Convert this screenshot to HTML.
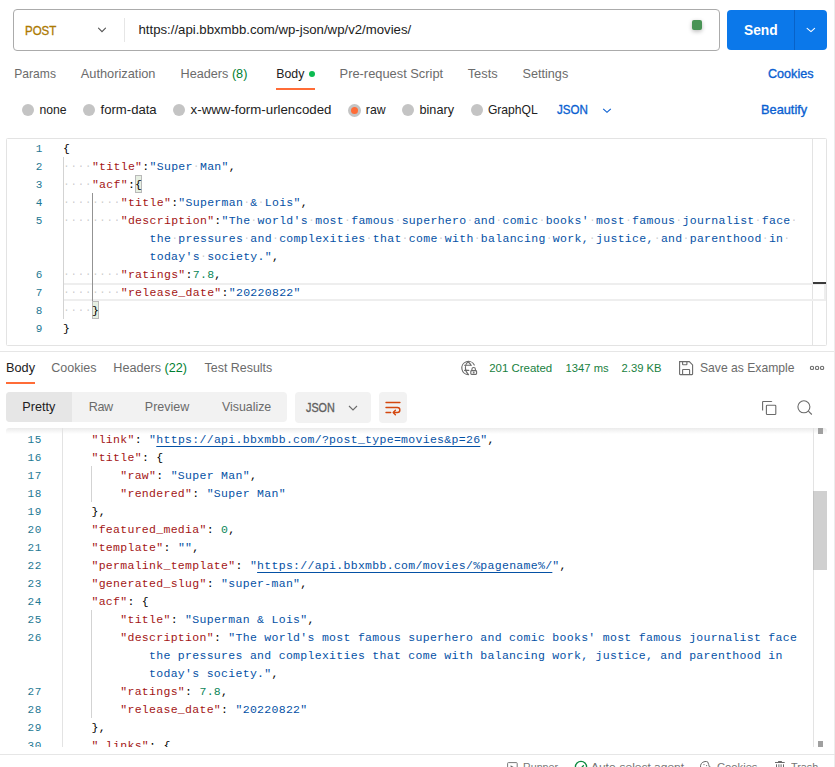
<!DOCTYPE html><html><head><meta charset="utf-8"><style>
*{margin:0;padding:0;box-sizing:border-box}
html,body{width:835px;height:767px;overflow:hidden;background:#fff}
body{position:relative;font-family:"Liberation Sans",sans-serif}
.t{position:absolute;white-space:pre;line-height:20px}
.abs{position:absolute}
.code{position:absolute;font-family:"Liberation Mono",monospace;font-size:11.5px;letter-spacing:0.3px;line-height:18px;white-space:pre;height:18px}
.ln{font-size:11px;letter-spacing:0.6px}
.lk{text-decoration:underline;text-underline-offset:3px;text-decoration-thickness:1px;text-decoration-skip-ink:none}
</style></head><body>
<div class="abs" style="left:834px;top:0;width:1px;height:767px;background:#ececec"></div><div class="abs" style="left:13px;top:9px;width:707px;height:42px;border:1px solid #ababab;border-radius:4px"></div><div class="t" style="left:25px;top:20.63px;font-size:12.6px;color:#ad7a03;font-weight:400;-webkit-text-stroke:0.35px #ad7a03;transform:scaleX(0.9127);transform-origin:0 0;">POST</div>
<svg class="abs" style="left:97px;top:26px" width="10" height="8" viewBox="0 0 10 8"><path d="M1.5 2.2 L5 5.7 L8.5 2.2" fill="none" stroke="#555555" stroke-width="1.1" stroke-linecap="round"/></svg><div class="abs" style="left:124px;top:18px;width:1px;height:24px;background:#e6e6e6"></div><div class="t" style="left:138.5px;top:19.83px;font-size:13.2px;color:#212121;font-weight:400;">https://api.bbxmbb.com/wp-json/wp/v2/movies/</div>
<div class="abs" style="left:692px;top:20px;width:10px;height:10px;background:#489455;border-radius:2px;box-shadow:0 1.5px 4px rgba(0,0,0,0.28)"></div><div class="abs" style="left:727px;top:10px;width:100px;height:40px;background:#0b78ea;border-radius:4px"></div><div class="abs" style="left:794px;top:10px;width:1px;height:40px;background:#0862c8"></div><div class="t" style="left:743.5px;top:19.61px;font-size:14.4px;color:#ffffff;font-weight:700;transform:scaleX(0.9583);transform-origin:0 0;">Send</div>
<svg class="abs" style="left:805px;top:25px" width="12" height="10" viewBox="0 0 12 10"><path d="M2.1 3.4 L6 6.6 L9.6 3.4" fill="none" stroke="#ffffff" stroke-width="1.1" stroke-linecap="round" stroke-linejoin="round"/></svg><div class="t" style="left:14.3px;top:63.81px;font-size:12.1px;color:#6b6b6b;font-weight:400;">Params</div>
<div class="t" style="left:80.8px;top:63.56px;font-size:12.8px;color:#6b6b6b;font-weight:400;">Authorization</div>
<div class="t" style="left:180.6px;top:63.62px;font-size:12.65px;color:#6b6b6b;font-weight:400;">Headers <span style="color:#007f31">(8)</span></div>
<div class="t" style="left:276.3px;top:63.74px;font-size:12.3px;color:#212121;font-weight:400;">Body</div>
<div class="t" style="left:339.6px;top:63.55px;font-size:12.85px;color:#6b6b6b;font-weight:400;">Pre-request Script</div>
<div class="t" style="left:467.7px;top:63.55px;font-size:12.85px;color:#6b6b6b;font-weight:400;">Tests</div>
<div class="t" style="left:522.5px;top:63.61px;font-size:12.67px;color:#6b6b6b;font-weight:400;">Settings</div>
<div class="abs" style="left:309px;top:71px;width:6px;height:6px;border-radius:50%;background:#0cbb52"></div><div class="abs" style="left:276px;top:88px;width:39px;height:2px;background:#ff6c37"></div><div class="t" style="left:768.4px;top:63.67px;font-size:12.5px;color:#0a5fd1;font-weight:400;-webkit-text-stroke:0.35px #0a5fd1;transform:scaleX(1.0080);transform-origin:0 0;">Cookies</div>
<div class="abs" style="left:22.2px;top:104.2px;width:12px;height:12px;border-radius:50%;background:#c4c4c4"></div><div class="t" style="left:39.5px;top:99.87px;font-size:12.2px;color:#212121;font-weight:400;">none</div>
<div class="abs" style="left:83px;top:104.2px;width:12px;height:12px;border-radius:50%;background:#c4c4c4"></div><div class="t" style="left:100.6px;top:99.56px;font-size:13.1px;color:#212121;font-weight:400;">form-data</div>
<div class="abs" style="left:173px;top:104.2px;width:12px;height:12px;border-radius:50%;background:#c4c4c4"></div><div class="t" style="left:190.6px;top:99.50px;font-size:13.28px;color:#212121;font-weight:400;">x-www-form-urlencoded</div>
<div class="abs" style="left:348.0px;top:104px;width:13px;height:13px;border-radius:50%;background:#c4c4c4"></div><div class="abs" style="left:351.0px;top:107px;width:7px;height:7px;border-radius:50%;background:#ff6c37"></div><div class="t" style="left:365.8px;top:99.85px;font-size:12.26px;color:#212121;font-weight:400;">raw</div>
<div class="abs" style="left:402.4px;top:104.2px;width:12px;height:12px;border-radius:50%;background:#c4c4c4"></div><div class="t" style="left:419.5px;top:99.71px;font-size:12.66px;color:#212121;font-weight:400;">binary</div>
<div class="abs" style="left:471px;top:104.2px;width:12px;height:12px;border-radius:50%;background:#c4c4c4"></div><div class="t" style="left:487.9px;top:99.90px;font-size:12.13px;color:#212121;font-weight:400;">GraphQL</div>
<div class="t" style="left:557px;top:99.60px;font-size:12.7px;color:#0a5fd1;font-weight:400;-webkit-text-stroke:0.35px #0a5fd1;transform:scaleX(0.9134);transform-origin:0 0;">JSON</div>
<svg class="abs" style="left:601px;top:105.5px" width="12" height="10" viewBox="0 0 12 10"><path d="M2.2 2.8 L6 6.3 L9.8 2.8" fill="none" stroke="#0a5fd1" stroke-width="1.15"/></svg><div class="t" style="left:761.4px;top:99.77px;font-size:12.2px;color:#0a5fd1;font-weight:400;-webkit-text-stroke:0.35px #0a5fd1;transform:scaleX(1.0492);transform-origin:0 0;">Beautify</div>
<div class="abs" style="left:6px;top:138px;width:821px;height:208px;border:1px solid #e3e3e3;border-radius:1.5px"></div><div class="abs" style="left:812px;top:139px;width:1px;height:206px;background:#e3e3e3"></div><div class="abs" style="left:63px;top:283px;width:763px;height:18px;border-top:2px solid #eeeeee;border-bottom:2px solid #eeeeee"></div><div class="abs" style="left:824px;top:283px;width:2px;height:18px;background:#eeeeee"></div><div class="abs" style="left:813px;top:282px;width:13px;height:2px;background:#3b3b3b"></div><div class="abs" style="left:63px;top:157px;width:1px;height:162px;background:#d3d3d3"></div><div class="abs" style="left:92px;top:193px;width:1px;height:108px;background:#939393"></div><div class="abs" style="left:135px;top:175px;width:7px;height:18px;background:#e6efe2;border:1px solid #b9b9b9"></div><div class="abs" style="left:92px;top:301px;width:7px;height:18px;background:#e6efe2;border:1px solid #b9b9b9"></div><div class="code ln" style="left:19px;top:139.8px;width:24px;text-align:right;color:#237893">1</div><div class="code" style="left:63.1px;top:139.8px"><span style="color:#000000">{</span></div><div class="code ln" style="left:19px;top:157.8px;width:24px;text-align:right;color:#237893">2</div><div class="code" style="left:63.1px;top:157.8px"><span style="color:rgba(51,51,51,0.25)"><span style="color:rgba(51,51,51,0.25);position:relative;top:-1px">·</span><span style="color:rgba(51,51,51,0.25);position:relative;top:-1px">·</span><span style="color:rgba(51,51,51,0.25);position:relative;top:-1px">·</span><span style="color:rgba(51,51,51,0.25);position:relative;top:-1px">·</span></span><span style="color:#a31515">&quot;title&quot;</span><span style="color:#000000">:</span><span style="color:#0451a5">&quot;Super<span style="color:rgba(51,51,51,0.25);position:relative;top:-1px">·</span>Man&quot;</span><span style="color:#000000">,</span></div><div class="code ln" style="left:19px;top:175.8px;width:24px;text-align:right;color:#237893">3</div><div class="code" style="left:63.1px;top:175.8px"><span style="color:rgba(51,51,51,0.25)"><span style="color:rgba(51,51,51,0.25);position:relative;top:-1px">·</span><span style="color:rgba(51,51,51,0.25);position:relative;top:-1px">·</span><span style="color:rgba(51,51,51,0.25);position:relative;top:-1px">·</span><span style="color:rgba(51,51,51,0.25);position:relative;top:-1px">·</span></span><span style="color:#a31515">&quot;acf&quot;</span><span style="color:#000000">:{</span></div><div class="code ln" style="left:19px;top:193.8px;width:24px;text-align:right;color:#237893">4</div><div class="code" style="left:63.1px;top:193.8px"><span style="color:rgba(51,51,51,0.25)"><span style="color:rgba(51,51,51,0.25);position:relative;top:-1px">·</span><span style="color:rgba(51,51,51,0.25);position:relative;top:-1px">·</span><span style="color:rgba(51,51,51,0.25);position:relative;top:-1px">·</span><span style="color:rgba(51,51,51,0.25);position:relative;top:-1px">·</span><span style="color:rgba(51,51,51,0.25);position:relative;top:-1px">·</span><span style="color:rgba(51,51,51,0.25);position:relative;top:-1px">·</span><span style="color:rgba(51,51,51,0.25);position:relative;top:-1px">·</span><span style="color:rgba(51,51,51,0.25);position:relative;top:-1px">·</span></span><span style="color:#a31515">&quot;title&quot;</span><span style="color:#000000">:</span><span style="color:#0451a5">&quot;Superman<span style="color:rgba(51,51,51,0.25);position:relative;top:-1px">·</span>&amp;<span style="color:rgba(51,51,51,0.25);position:relative;top:-1px">·</span>Lois&quot;</span><span style="color:#000000">,</span></div><div class="code ln" style="left:19px;top:211.8px;width:24px;text-align:right;color:#237893">5</div><div class="code" style="left:63.1px;top:211.8px"><span style="color:rgba(51,51,51,0.25)"><span style="color:rgba(51,51,51,0.25);position:relative;top:-1px">·</span><span style="color:rgba(51,51,51,0.25);position:relative;top:-1px">·</span><span style="color:rgba(51,51,51,0.25);position:relative;top:-1px">·</span><span style="color:rgba(51,51,51,0.25);position:relative;top:-1px">·</span><span style="color:rgba(51,51,51,0.25);position:relative;top:-1px">·</span><span style="color:rgba(51,51,51,0.25);position:relative;top:-1px">·</span><span style="color:rgba(51,51,51,0.25);position:relative;top:-1px">·</span><span style="color:rgba(51,51,51,0.25);position:relative;top:-1px">·</span></span><span style="color:#a31515">&quot;description&quot;</span><span style="color:#000000">:</span><span style="color:#0451a5">&quot;The<span style="color:rgba(51,51,51,0.25);position:relative;top:-1px">·</span>world&#x27;s<span style="color:rgba(51,51,51,0.25);position:relative;top:-1px">·</span>most<span style="color:rgba(51,51,51,0.25);position:relative;top:-1px">·</span>famous<span style="color:rgba(51,51,51,0.25);position:relative;top:-1px">·</span>superhero<span style="color:rgba(51,51,51,0.25);position:relative;top:-1px">·</span>and<span style="color:rgba(51,51,51,0.25);position:relative;top:-1px">·</span>comic<span style="color:rgba(51,51,51,0.25);position:relative;top:-1px">·</span>books&#x27;<span style="color:rgba(51,51,51,0.25);position:relative;top:-1px">·</span>most<span style="color:rgba(51,51,51,0.25);position:relative;top:-1px">·</span>famous<span style="color:rgba(51,51,51,0.25);position:relative;top:-1px">·</span>journalist<span style="color:rgba(51,51,51,0.25);position:relative;top:-1px">·</span>face<span style="color:rgba(51,51,51,0.25);position:relative;top:-1px">·</span></span></div><div class="code" style="left:63.1px;top:229.8px"><span style="color:#000000">            </span><span style="color:#0451a5">the<span style="color:rgba(51,51,51,0.25);position:relative;top:-1px">·</span>pressures<span style="color:rgba(51,51,51,0.25);position:relative;top:-1px">·</span>and<span style="color:rgba(51,51,51,0.25);position:relative;top:-1px">·</span>complexities<span style="color:rgba(51,51,51,0.25);position:relative;top:-1px">·</span>that<span style="color:rgba(51,51,51,0.25);position:relative;top:-1px">·</span>come<span style="color:rgba(51,51,51,0.25);position:relative;top:-1px">·</span>with<span style="color:rgba(51,51,51,0.25);position:relative;top:-1px">·</span>balancing<span style="color:rgba(51,51,51,0.25);position:relative;top:-1px">·</span>work,<span style="color:rgba(51,51,51,0.25);position:relative;top:-1px">·</span>justice,<span style="color:rgba(51,51,51,0.25);position:relative;top:-1px">·</span>and<span style="color:rgba(51,51,51,0.25);position:relative;top:-1px">·</span>parenthood<span style="color:rgba(51,51,51,0.25);position:relative;top:-1px">·</span>in<span style="color:rgba(51,51,51,0.25);position:relative;top:-1px">·</span></span></div><div class="code" style="left:63.1px;top:247.8px"><span style="color:#000000">            </span><span style="color:#0451a5">today&#x27;s<span style="color:rgba(51,51,51,0.25);position:relative;top:-1px">·</span>society.&quot;</span><span style="color:#000000">,</span></div><div class="code ln" style="left:19px;top:265.8px;width:24px;text-align:right;color:#237893">6</div><div class="code" style="left:63.1px;top:265.8px"><span style="color:rgba(51,51,51,0.25)"><span style="color:rgba(51,51,51,0.25);position:relative;top:-1px">·</span><span style="color:rgba(51,51,51,0.25);position:relative;top:-1px">·</span><span style="color:rgba(51,51,51,0.25);position:relative;top:-1px">·</span><span style="color:rgba(51,51,51,0.25);position:relative;top:-1px">·</span><span style="color:rgba(51,51,51,0.25);position:relative;top:-1px">·</span><span style="color:rgba(51,51,51,0.25);position:relative;top:-1px">·</span><span style="color:rgba(51,51,51,0.25);position:relative;top:-1px">·</span><span style="color:rgba(51,51,51,0.25);position:relative;top:-1px">·</span></span><span style="color:#a31515">&quot;ratings&quot;</span><span style="color:#000000">:</span><span style="color:#098658">7.8</span><span style="color:#000000">,</span></div><div class="code ln" style="left:19px;top:283.8px;width:24px;text-align:right;color:#237893">7</div><div class="code" style="left:63.1px;top:283.8px"><span style="color:rgba(51,51,51,0.25)"><span style="color:rgba(51,51,51,0.25);position:relative;top:-1px">·</span><span style="color:rgba(51,51,51,0.25);position:relative;top:-1px">·</span><span style="color:rgba(51,51,51,0.25);position:relative;top:-1px">·</span><span style="color:rgba(51,51,51,0.25);position:relative;top:-1px">·</span><span style="color:rgba(51,51,51,0.25);position:relative;top:-1px">·</span><span style="color:rgba(51,51,51,0.25);position:relative;top:-1px">·</span><span style="color:rgba(51,51,51,0.25);position:relative;top:-1px">·</span><span style="color:rgba(51,51,51,0.25);position:relative;top:-1px">·</span></span><span style="color:#a31515">&quot;release_date&quot;</span><span style="color:#000000">:</span><span style="color:#0451a5">&quot;20220822&quot;</span></div><div class="code ln" style="left:19px;top:301.8px;width:24px;text-align:right;color:#237893">8</div><div class="code" style="left:63.1px;top:301.8px"><span style="color:rgba(51,51,51,0.25)"><span style="color:rgba(51,51,51,0.25);position:relative;top:-1px">·</span><span style="color:rgba(51,51,51,0.25);position:relative;top:-1px">·</span><span style="color:rgba(51,51,51,0.25);position:relative;top:-1px">·</span><span style="color:rgba(51,51,51,0.25);position:relative;top:-1px">·</span></span><span style="color:#000000">}</span></div><div class="code ln" style="left:19px;top:319.8px;width:24px;text-align:right;color:#237893">9</div><div class="code" style="left:63.1px;top:319.8px"><span style="color:#000000">}</span></div><div class="abs" style="left:0;top:351px;width:834px;height:1px;background:#e6e6e6"></div><div class="t" style="left:6px;top:357.99px;font-size:12.72px;color:#212121;font-weight:400;">Body</div>
<div class="t" style="left:51.3px;top:358.06px;font-size:12.53px;color:#6b6b6b;font-weight:400;">Cookies</div>
<div class="t" style="left:113.3px;top:358.02px;font-size:12.65px;color:#6b6b6b;font-weight:400;">Headers <span style="color:#007f31">(22)</span></div>
<div class="t" style="left:204.6px;top:358.09px;font-size:12.43px;color:#6b6b6b;font-weight:400;">Test Results</div>
<div class="abs" style="left:6px;top:382px;width:29px;height:2px;background:#ff6c37"></div><svg class="abs" style="left:457px;top:357px" width="24" height="22" viewBox="0 0 24 22">
<g fill="none" stroke="#6b6b6b" stroke-width="1.1" stroke-linecap="round">
<path d="M17.3 8.0 A6.6 6.6 0 1 0 11.6 17.6"/>
<path d="M10.8 4.8 C9.2 6.2 8.4 8 8.4 10.8 C8.4 13.6 9.2 15.6 11.4 17.4"/>
<path d="M7.6 8.3 H14.2 M7.6 13.4 H11.8"/>
<path d="M11 4.7 C12.4 5.8 13.4 6.9 14.0 8.3"/>
<rect x="13.8" y="13.6" width="5.8" height="3.8" rx="0.9"/>
<path d="M14.9 13.6 V12.2 A1.7 1.7 0 0 1 18.4 12.2 V13.6"/>
<circle cx="16.7" cy="15.5" r="0.35" fill="#6b6b6b"/>
</g></svg><div class="t" style="left:489.2px;top:357.84px;font-size:11.44px;color:#187f3e;font-weight:400;">201 Created</div>
<div class="t" style="left:565.6px;top:357.92px;font-size:11.21px;color:#187f3e;font-weight:400;">1347 ms</div>
<div class="t" style="left:621.6px;top:357.91px;font-size:11.24px;color:#187f3e;font-weight:400;">2.39 KB</div>
<svg class="abs" style="left:677px;top:359px" width="18" height="18" viewBox="0 0 18 18">
<g fill="none" stroke="#6b6b6b" stroke-width="1.1">
<path d="M2.6 2.6 H12.3 L15.6 5.9 V15 A0.6 0.6 0 0 1 15 15.6 H3.2 A0.6 0.6 0 0 1 2.6 15 Z"/>
<path d="M5.6 2.6 V5.2 A0.5 0.5 0 0 0 6.1 5.7 H9.4 A0.5 0.5 0 0 0 9.9 5.2 V2.6"/>
<path d="M5.6 15.6 V11 A0.5 0.5 0 0 1 6.1 10.5 H12.1 A0.5 0.5 0 0 1 12.6 11 V15.6"/>
</g></svg><div class="t" style="left:700px;top:357.59px;font-size:12.15px;color:#6b6b6b;font-weight:400;">Save as Example</div>
<svg class="abs" style="left:808px;top:364px" width="18" height="8" viewBox="0 0 18 8">
<g fill="none" stroke="#6b6b6b" stroke-width="1.1"><circle cx="4" cy="3.9" r="1.65"/><circle cx="9.1" cy="3.9" r="1.65"/><circle cx="14.1" cy="3.9" r="1.65"/></g></svg><div class="abs" style="left:6px;top:392px;width:281px;height:30px;background:#f2f2f2;border-radius:4px;overflow:hidden"><div style="width:66px;height:30px;background:#e6e6e6"></div></div><div class="t" style="left:22.3px;top:397.12px;font-size:12.64px;color:#212121;font-weight:400;">Pretty</div>
<div class="t" style="left:88.7px;top:397.13px;font-size:12.6px;color:#6b6b6b;font-weight:400;letter-spacing:-0.4px">Raw</div>
<div class="t" style="left:144.8px;top:397.17px;font-size:12.5px;color:#6b6b6b;font-weight:400;">Preview</div>
<div class="t" style="left:221.9px;top:397.20px;font-size:12.4px;color:#6b6b6b;font-weight:400;">Visualize</div>
<div class="abs" style="left:295px;top:392px;width:76px;height:31px;background:#f2f2f2;border-radius:4px"></div><div class="t" style="left:305.9px;top:398.27px;font-size:12.2px;color:#606060;font-weight:400;-webkit-text-stroke:0.35px #606060;transform:scaleX(0.8852);transform-origin:0 0;">JSON</div>
<svg class="abs" style="left:347px;top:403px" width="12" height="10" viewBox="0 0 12 10"><path d="M2 3 L6 7 L10 3" fill="none" stroke="#6b6b6b" stroke-width="1.1"/></svg><div class="abs" style="left:379px;top:392px;width:28px;height:31px;background:#f2f2f2;border-radius:4px"></div><svg class="abs" style="left:383px;top:398px" width="20" height="18" viewBox="0 0 20 18">
<g fill="none" stroke="#d4470f" stroke-width="1.4" stroke-linecap="round" stroke-linejoin="round">
<path d="M3 4.43 H16.9"/>
<path d="M3 9.5 H14.4 A2.47 2.47 0 0 1 14.4 14.44 H10.6"/>
<path d="M3 14.44 H7.7"/>
<path d="M12.4 12.2 L10.2 14.44 L12.4 16.7"/>
</g></svg><svg class="abs" style="left:760px;top:398px" width="18" height="18" viewBox="0 0 18 18">
<g fill="none" stroke="#6b6b6b" stroke-width="1.1">
<path d="M2.6 12.6 V4.1 A0.6 0.6 0 0 1 3.2 3.5 H11.1 A0.6 0.6 0 0 1 11.7 4.1"/>
<rect x="6.4" y="7.3" width="9.4" height="9.2" rx="0.8"/>
</g></svg><svg class="abs" style="left:795px;top:398px" width="20" height="18" viewBox="0 0 20 18">
<g fill="none" stroke="#6b6b6b" stroke-width="1.1">
<circle cx="8.9" cy="8.8" r="6"/><path d="M13.4 13.2 L16.8 16.5"/>
</g></svg><div class="abs" style="left:6px;top:428px;width:821px;height:6px;border-radius:3px 3px 0 0;background:linear-gradient(#ebebeb,rgba(255,255,255,0))"></div><div class="abs" style="left:62px;top:428px;width:1px;height:319px;background:#e3e3e3"></div><div class="abs" style="left:813px;top:428px;width:1px;height:319px;background:#e3e3e3"></div><div class="abs" style="left:813px;top:491px;width:14px;height:79px;background:#d0d0d0"></div><div class="abs" style="left:813px;top:491px;width:1px;height:79px;background:#c2c2c2"></div><div class="abs" style="left:818px;top:428px;width:5px;height:6px;background:#a0a0a0"></div><div class="abs" style="left:818px;top:741px;width:5px;height:6px;background:#a0a0a0"></div><div class="abs" style="left:91px;top:466px;width:1px;height:36px;background:#d3d3d3"></div><div class="abs" style="left:91px;top:610px;width:1px;height:108px;background:#d3d3d3"></div><div class="abs" style="left:0;top:430px;width:813px;height:317px;overflow:hidden"><div class="code ln" style="left:21px;top:0.8px;width:21px;text-align:right;color:#237893">15</div><div class="code" style="left:62.65px;top:0.8px"><span style="color:#000000">    </span><span style="color:#a31515">&quot;link&quot;</span><span style="color:#000000">: </span><span style="color:#0451a5">&quot;</span><span class="lk" style="color:#0451a5">https://api.bbxmbb.com/?post_type=movies&amp;p=26</span><span style="color:#0451a5">&quot;</span><span style="color:#000000">,</span></div><div class="code ln" style="left:21px;top:18.8px;width:21px;text-align:right;color:#237893">16</div><div class="code" style="left:62.65px;top:18.8px"><span style="color:#000000">    </span><span style="color:#a31515">&quot;title&quot;</span><span style="color:#000000">: {</span></div><div class="code ln" style="left:21px;top:36.8px;width:21px;text-align:right;color:#237893">17</div><div class="code" style="left:62.65px;top:36.8px"><span style="color:#000000">        </span><span style="color:#a31515">&quot;raw&quot;</span><span style="color:#000000">: </span><span style="color:#0451a5">&quot;Super Man&quot;</span><span style="color:#000000">,</span></div><div class="code ln" style="left:21px;top:54.8px;width:21px;text-align:right;color:#237893">18</div><div class="code" style="left:62.65px;top:54.8px"><span style="color:#000000">        </span><span style="color:#a31515">&quot;rendered&quot;</span><span style="color:#000000">: </span><span style="color:#0451a5">&quot;Super Man&quot;</span></div><div class="code ln" style="left:21px;top:72.8px;width:21px;text-align:right;color:#237893">19</div><div class="code" style="left:62.65px;top:72.8px"><span style="color:#000000">    },</span></div><div class="code ln" style="left:21px;top:90.8px;width:21px;text-align:right;color:#237893">20</div><div class="code" style="left:62.65px;top:90.8px"><span style="color:#000000">    </span><span style="color:#a31515">&quot;featured_media&quot;</span><span style="color:#000000">: </span><span style="color:#098658">0</span><span style="color:#000000">,</span></div><div class="code ln" style="left:21px;top:108.8px;width:21px;text-align:right;color:#237893">21</div><div class="code" style="left:62.65px;top:108.8px"><span style="color:#000000">    </span><span style="color:#a31515">&quot;template&quot;</span><span style="color:#000000">: </span><span style="color:#0451a5">&quot;&quot;</span><span style="color:#000000">,</span></div><div class="code ln" style="left:21px;top:126.8px;width:21px;text-align:right;color:#237893">22</div><div class="code" style="left:62.65px;top:126.8px"><span style="color:#000000">    </span><span style="color:#a31515">&quot;permalink_template&quot;</span><span style="color:#000000">: </span><span style="color:#0451a5">&quot;</span><span class="lk" style="color:#0451a5">https://api.bbxmbb.com/movies/%pagename%/</span><span style="color:#0451a5">&quot;</span><span style="color:#000000">,</span></div><div class="code ln" style="left:21px;top:144.8px;width:21px;text-align:right;color:#237893">23</div><div class="code" style="left:62.65px;top:144.8px"><span style="color:#000000">    </span><span style="color:#a31515">&quot;generated_slug&quot;</span><span style="color:#000000">: </span><span style="color:#0451a5">&quot;super-man&quot;</span><span style="color:#000000">,</span></div><div class="code ln" style="left:21px;top:162.8px;width:21px;text-align:right;color:#237893">24</div><div class="code" style="left:62.65px;top:162.8px"><span style="color:#000000">    </span><span style="color:#a31515">&quot;acf&quot;</span><span style="color:#000000">: {</span></div><div class="code ln" style="left:21px;top:180.8px;width:21px;text-align:right;color:#237893">25</div><div class="code" style="left:62.65px;top:180.8px"><span style="color:#000000">        </span><span style="color:#a31515">&quot;title&quot;</span><span style="color:#000000">: </span><span style="color:#0451a5">&quot;Superman &amp; Lois&quot;</span><span style="color:#000000">,</span></div><div class="code ln" style="left:21px;top:198.8px;width:21px;text-align:right;color:#237893">26</div><div class="code" style="left:62.65px;top:198.8px"><span style="color:#000000">        </span><span style="color:#a31515">&quot;description&quot;</span><span style="color:#000000">: </span><span style="color:#0451a5">&quot;The world&#x27;s most famous superhero and comic books&#x27; most famous journalist face</span></div><div class="code" style="left:62.65px;top:216.8px"><span style="color:#000000">            </span><span style="color:#0451a5">the pressures and complexities that come with balancing work, justice, and parenthood in</span></div><div class="code" style="left:62.65px;top:234.8px"><span style="color:#000000">            </span><span style="color:#0451a5">today&#x27;s society.&quot;</span><span style="color:#000000">,</span></div><div class="code ln" style="left:21px;top:252.8px;width:21px;text-align:right;color:#237893">27</div><div class="code" style="left:62.65px;top:252.8px"><span style="color:#000000">        </span><span style="color:#a31515">&quot;ratings&quot;</span><span style="color:#000000">: </span><span style="color:#098658">7.8</span><span style="color:#000000">,</span></div><div class="code ln" style="left:21px;top:270.8px;width:21px;text-align:right;color:#237893">28</div><div class="code" style="left:62.65px;top:270.8px"><span style="color:#000000">        </span><span style="color:#a31515">&quot;release_date&quot;</span><span style="color:#000000">: </span><span style="color:#0451a5">&quot;20220822&quot;</span></div><div class="code ln" style="left:21px;top:288.8px;width:21px;text-align:right;color:#237893">29</div><div class="code" style="left:62.65px;top:288.8px"><span style="color:#000000">    },</span></div><div class="code ln" style="left:21px;top:306.8px;width:21px;text-align:right;color:#237893">30</div><div class="code" style="left:62.65px;top:306.8px"><span style="color:#000000">    </span><span style="color:#a31515">&quot;_links&quot;</span><span style="color:#000000">: {</span></div></div><div class="abs" style="left:0;top:754px;width:835px;height:1px;background:#e6e6e6"></div><svg class="abs" style="left:506px;top:760px" width="14" height="8" viewBox="0 0 14 8"><g fill="none" stroke="#7a7a7a" stroke-width="1.0"><rect x="1.6" y="2.6" width="9.6" height="10" rx="0.8"/></g><path d="M4.6 5.2 L8.6 7.6 L4.6 10 Z" fill="#6b6b6b"/></svg><div class="t" style="left:522.5px;top:757.02px;font-size:11.5px;color:#757575;font-weight:400;transform:scaleX(0.9278);transform-origin:0 0;">Runner</div>
<svg class="abs" style="left:574px;top:759px" width="14" height="8" viewBox="0 0 14 8"><g fill="none" stroke="#0b8a3f" stroke-width="1.3"><circle cx="7" cy="8" r="5.6"/><path d="M4.3 8.2 L6.3 10 L9.8 6.2"/></g></svg><div class="t" style="left:590.7px;top:757.02px;font-size:11.5px;color:#757575;font-weight:400;transform:scaleX(1.0391);transform-origin:0 0;">Auto-select agent</div>
<svg class="abs" style="left:698px;top:759px" width="16" height="8" viewBox="0 0 16 8"><g fill="none" stroke="#6b6b6b" stroke-width="1"><path d="M9.7 2.9 C9 2.5 8 2.4 7 2.5 A5.6 5.6 0 1 0 13.6 8.8 L11.2 7.6 L10.7 5.5 Z"/></g><circle cx="6" cy="5.6" r="0.6" fill="#6b6b6b"/><circle cx="8.6" cy="6.6" r="0.6" fill="#6b6b6b"/></svg><div class="t" style="left:716.5px;top:757.02px;font-size:11.5px;color:#757575;font-weight:400;transform:scaleX(0.9739);transform-origin:0 0;">Cookies</div>
<svg class="abs" style="left:773px;top:759px" width="14" height="8" viewBox="0 0 14 8"><g fill="none" stroke="#6b6b6b" stroke-width="1"><path d="M2 3.5 H11.7 M5.1 2.5 H8.9 M3.5 5.3 V13 M10.5 5.3 V13 M5.9 5.3 V11 M8.1 5.3 V11"/></g></svg><div class="t" style="left:790.7px;top:757.02px;font-size:11.5px;color:#757575;font-weight:400;transform:scaleX(0.9417);transform-origin:0 0;">Trash</div>

</body></html>
